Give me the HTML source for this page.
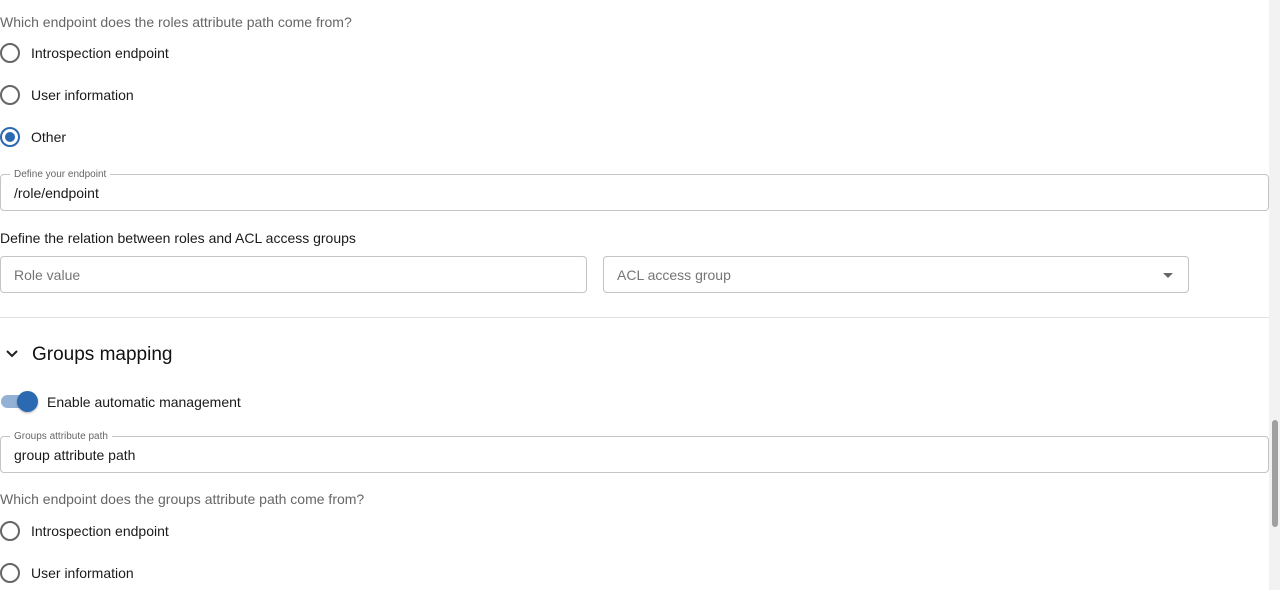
<!DOCTYPE html>
<html><head><style>
*{box-sizing:border-box;margin:0;padding:0}
body{width:1280px;height:590px;overflow:hidden;background:#fff;font-family:"Liberation Sans",sans-serif;color:#212121;position:relative}
.a{position:absolute}
.q{font-size:14px;color:#666}
.lab{font-size:14px;color:#1a1a1a}
.radio{position:absolute;left:0;width:20px;height:20px;border:2px solid #666;border-radius:50%}
.radio.on{border-color:#2b69b0}
.radio.on::after{content:"";position:absolute;left:3px;top:3px;width:10px;height:10px;border-radius:50%;background:#2b69b0}
.field{position:absolute;border:1px solid #c4c4c4;border-radius:4px}
.leg{position:absolute;top:-6px;left:9px;background:#fff;padding:0 4px;font-size:10px;color:#666;line-height:11px}
.val{position:absolute;left:13px;font-size:14px;color:#1a1a1a}
</style></head><body>
<div class="a q" style="left:0;top:14px">Which endpoint does the roles attribute path come from?</div>
<div class="radio" style="top:43px"></div><div class="a lab" style="left:31px;top:45px">Introspection endpoint</div>
<div class="radio" style="top:85px"></div><div class="a lab" style="left:31px;top:87px">User information</div>
<div class="radio on" style="top:127px"></div><div class="a lab" style="left:31px;top:129px">Other</div>
<div class="field" style="left:0;top:174px;width:1269px;height:37px"><div class="leg">Define your endpoint</div><div class="val" style="top:10px">/role/endpoint</div></div>
<div class="a lab" style="left:0;top:230px">Define the relation between roles and ACL access groups</div>
<div class="field" style="left:0;top:256px;width:587px;height:37px"><div class="val" style="top:10px;color:#757575">Role value</div></div>
<div class="field" style="left:603px;top:256px;width:586px;height:37px"><div class="val" style="top:10px;color:#757575">ACL access group</div>
<div class="a" style="right:15px;top:16px;width:0;height:0;border-left:5px solid transparent;border-right:5px solid transparent;border-top:5px solid #666"></div></div>
<div class="a" style="left:0;top:317px;width:1269px;height:1px;background:#e0e0e0"></div>
<svg class="a" style="left:5px;top:348px" width="14" height="12" viewBox="0 0 14 12"><path d="M2 3l5 5 5-5" fill="none" stroke="#222" stroke-width="2"/></svg>
<div class="a" style="left:32px;top:344px;font-size:19px;color:#111">Groups mapping</div>
<div class="a" style="left:1px;top:395px;width:32px;height:13px;border-radius:7px;background:#93b1d5"></div>
<div class="a" style="left:17px;top:391px;width:21px;height:21px;border-radius:50%;background:#2b69b0;box-shadow:0 1px 2px rgba(0,0,0,.3)"></div>
<div class="a lab" style="left:47px;top:394px">Enable automatic management</div>
<div class="field" style="left:0;top:436px;width:1269px;height:37px"><div class="leg">Groups attribute path</div><div class="val" style="top:10px">group attribute path</div></div>
<div class="a q" style="left:0;top:491px">Which endpoint does the groups attribute path come from?</div>
<div class="radio" style="top:521px"></div><div class="a lab" style="left:31px;top:523px">Introspection endpoint</div>
<div class="radio" style="top:563px"></div><div class="a lab" style="left:31px;top:565px">User information</div>
<div class="a" style="left:1269px;top:0;width:11px;height:590px;background:#f2f2f2"></div>
<div class="a" style="left:1272px;top:420px;width:6px;height:107px;border-radius:3px;background:#a0a0a0"></div>
</body></html>
